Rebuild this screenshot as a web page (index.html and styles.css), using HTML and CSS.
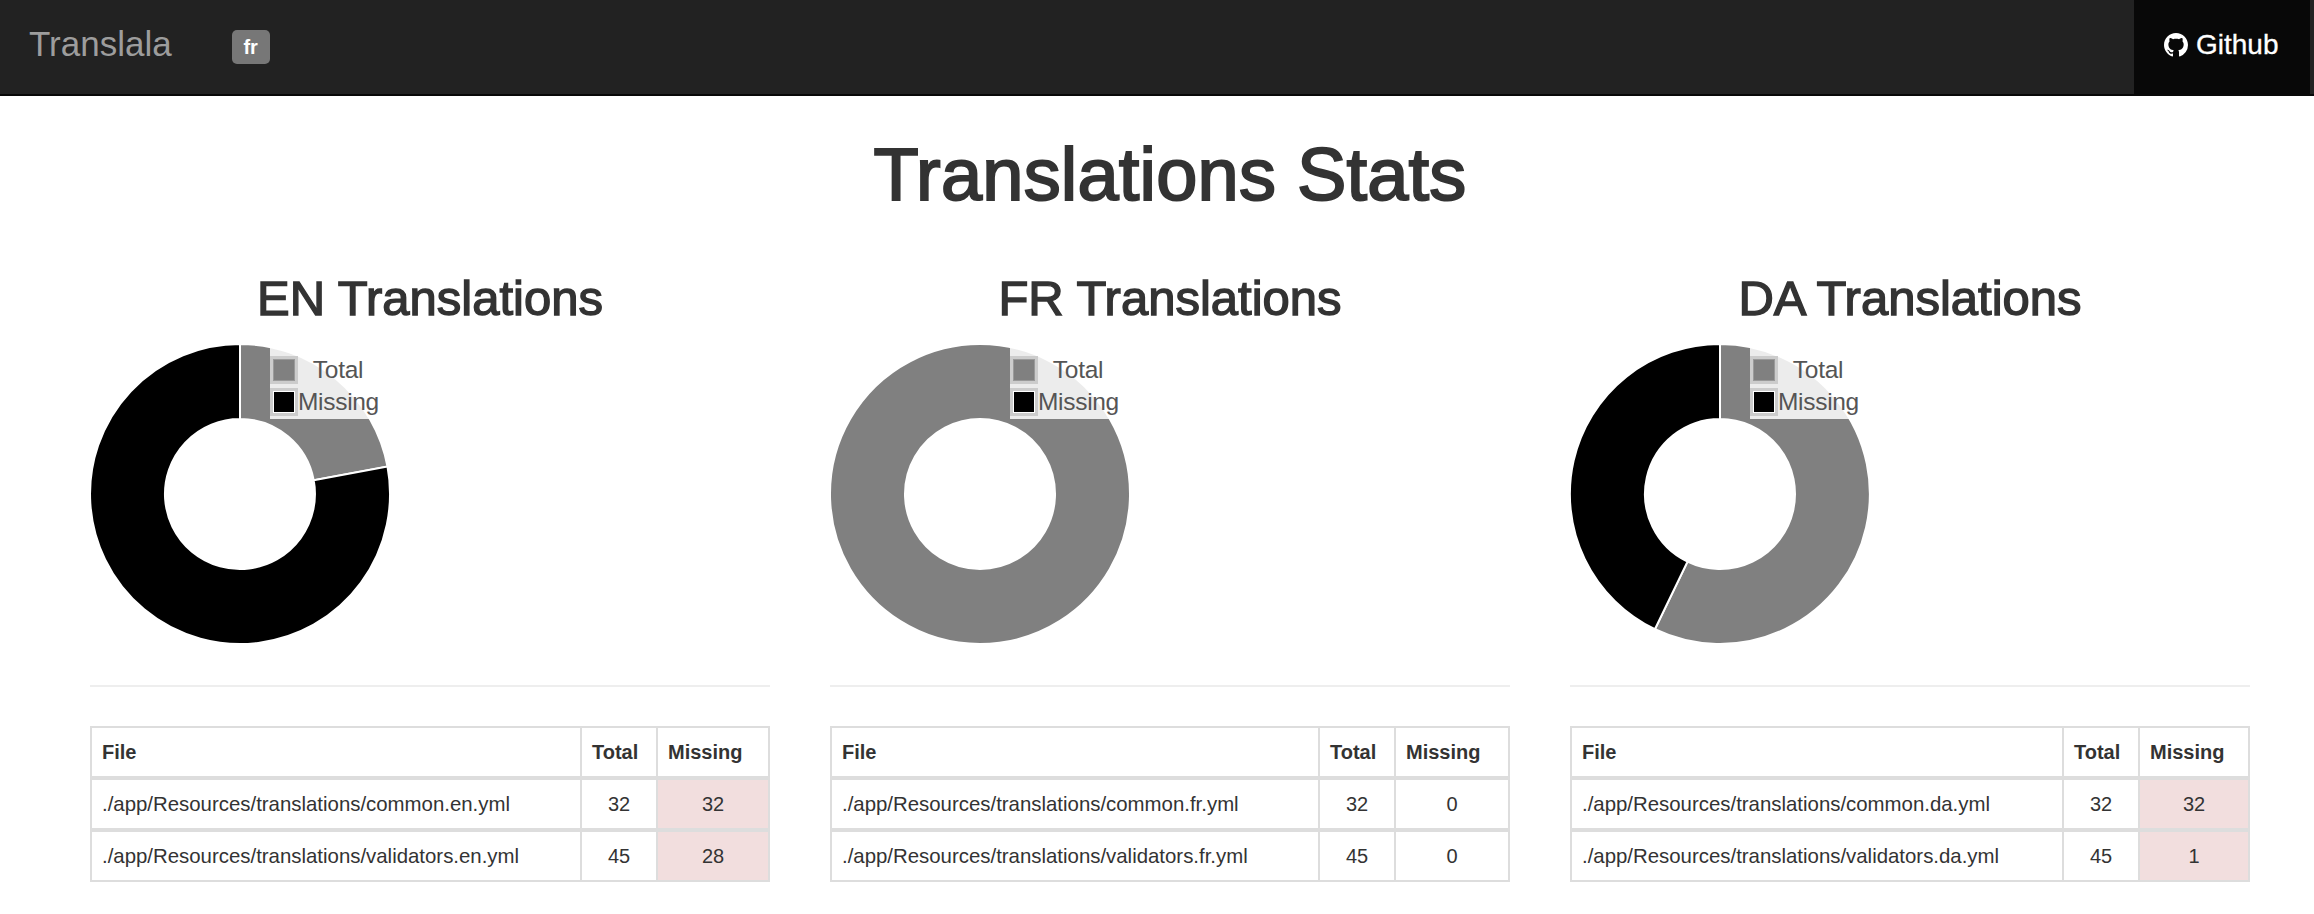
FILE: index.html
```html
<!DOCTYPE html>
<html lang="en">
<head>
<meta charset="utf-8">
<title>Translala</title>
<link rel="stylesheet" href="styles.css">
</head>
<body>
<nav class="navbar">
  <div class="nav-left">
    <a class="brand">Translala</a>
    <span class="badge">fr</span>
  </div>
  <a class="github">
    <svg class="gh-icon" viewBox="0 0 16 16"><path fill="#fff" d="M8 0C3.58 0 0 3.58 0 8c0 3.54 2.29 6.53 5.47 7.59.4.07.55-.17.55-.38 0-.19-.01-.82-.01-1.49-2.01.37-2.53-.49-2.69-.94-.09-.23-.48-.94-.82-1.13-.28-.15-.68-.52-.01-.53.63-.01 1.08.58 1.23.82.72 1.21 1.87.87 2.33.66.07-.52.28-.87.51-1.07-1.78-.2-3.64-.89-3.64-3.95 0-.87.31-1.59.82-2.15-.08-.2-.36-1.02.08-2.12 0 0 .67-.21 2.2.82.64-.18 1.32-.27 2-.27.68 0 1.36.09 2 .27 1.53-1.04 2.2-.82 2.2-.82.44 1.1.16 1.92.08 2.12.51.56.82 1.27.82 2.15 0 3.07-1.87 3.75-3.65 3.95.29.25.54.73.54 1.48 0 1.07-.01 1.93-.01 2.2 0 .21.15.46.55.38A8.013 8.013 0 0 0 16 8c0-4.42-3.58-8-8-8z"/></svg>
    <span>Github</span>
  </a>
</nav>
<main class="container">
  <h1 class="title">Translations Stats</h1>
  <div class="columns">
    <section class="col">
      <h2 class="col-title">EN Translations</h2>
      <div class="chart">
        <svg class="donut" viewBox="0 0 300 300">
          <path class="seg-total" d="M150 0A150 150 0 0 1 297.5 122.6L223.7 136.3A75 75 0 0 0 150 75Z"/>
          <path class="seg-missing" d="M297.5 122.6A150 150 0 1 1 150 0L150 75A75 75 0 1 0 223.7 136.3Z"/>
        </svg>
        <ul class="legend">
          <li class="legend-row"><span class="swatch swatch-total"></span><span class="legend-label">Total</span></li>
          <li class="legend-row"><span class="swatch swatch-missing"></span><span class="legend-label">Missing</span></li>
        </ul>
      </div>
      <hr class="rule">
      <table class="stats stats-en">
        <thead><tr><th>File</th><th class="th-total">Total</th><th class="th-missing">Missing</th></tr></thead>
        <tbody>
          <tr><td>./app/Resources/translations/common.en.yml</td><td class="num">32</td><td class="num danger">32</td></tr>
          <tr><td>./app/Resources/translations/validators.en.yml</td><td class="num">45</td><td class="num danger">28</td></tr>
        </tbody>
      </table>
    </section>
    <section class="col">
      <h2 class="col-title">FR Translations</h2>
      <div class="chart">
        <svg class="donut" viewBox="0 0 300 300">
          <path class="seg-total" fill-rule="evenodd" d="M150 0A150 150 0 1 1 149.99 0ZM150 75A75 75 0 1 0 150.01 75Z"/>
        </svg>
        <ul class="legend">
          <li class="legend-row"><span class="swatch swatch-total"></span><span class="legend-label">Total</span></li>
          <li class="legend-row"><span class="swatch swatch-missing"></span><span class="legend-label">Missing</span></li>
        </ul>
      </div>
      <hr class="rule">
      <table class="stats stats-fr">
        <thead><tr><th>File</th><th class="th-total">Total</th><th class="th-missing">Missing</th></tr></thead>
        <tbody>
          <tr><td>./app/Resources/translations/common.fr.yml</td><td class="num">32</td><td class="num">0</td></tr>
          <tr><td>./app/Resources/translations/validators.fr.yml</td><td class="num">45</td><td class="num">0</td></tr>
        </tbody>
      </table>
    </section>
    <section class="col">
      <h2 class="col-title">DA Translations</h2>
      <div class="chart">
        <svg class="donut" viewBox="0 0 300 300">
          <path class="seg-total" d="M150 0A150 150 0 1 1 84.9 285.2L117.5 217.6A75 75 0 1 0 150 75Z"/>
          <path class="seg-missing" d="M84.9 285.2A150 150 0 0 1 150 0L150 75A75 75 0 0 0 117.5 217.6Z"/>
        </svg>
        <ul class="legend">
          <li class="legend-row"><span class="swatch swatch-total"></span><span class="legend-label">Total</span></li>
          <li class="legend-row"><span class="swatch swatch-missing"></span><span class="legend-label">Missing</span></li>
        </ul>
      </div>
      <hr class="rule">
      <table class="stats stats-da">
        <thead><tr><th>File</th><th class="th-total">Total</th><th class="th-missing">Missing</th></tr></thead>
        <tbody>
          <tr><td>./app/Resources/translations/common.da.yml</td><td class="num">32</td><td class="num danger">32</td></tr>
          <tr><td>./app/Resources/translations/validators.da.yml</td><td class="num">45</td><td class="num danger">1</td></tr>
        </tbody>
      </table>
    </section>
  </div>
</main>
</body>
</html>
```
FILE: styles.css
```css
* { box-sizing: border-box; }
html, body { margin: 0; padding: 0; }
body {
  font-family: "Liberation Sans", Arial, sans-serif;
  font-size: 20px;
  line-height: 1.43;
  color: #333;
  background: #fff;
  overflow: hidden;
}
.navbar {
  display: flex;
  justify-content: space-between;
  height: 96px;
  background: #222;
  border-bottom: 2px solid #080808;
}
.nav-left { display: flex; align-items: center; padding-left: 29px; }
.brand { font-size: 35px; color: #9d9d9d; margin-right: 60px; margin-top: -6px; }
.badge {
  display: flex; align-items: center; justify-content: center;
  width: 38px; height: 34px;
  background: #777; color: #fff; font-size: 20px; font-weight: 700; border-radius: 5px;
}
.github {
  display: flex; align-items: center; gap: 8px;
  width: 176px; padding: 0 0 4px 30px; margin-right: 4px;
  background: #080808; color: #fff; font-size: 28px;
  -webkit-text-stroke: 0.3px #fff;
}
.gh-icon { width: 24px; height: 24px; }
.container { padding: 0 64px 0 90px; }
.title {
  margin: 38px 0 0; text-align: center; font-size: 74px; font-weight: 400; line-height: 1.1;
  letter-spacing: 0.2px; -webkit-text-stroke: 2px #333;
}
.columns { display: grid; grid-template-columns: repeat(3, 680px); column-gap: 60px; margin-top: 57px; }
.col { min-width: 0; }
.col-title {
  margin: 0; text-align: center; font-size: 49px; font-weight: 400; line-height: 1.1;
  -webkit-text-stroke: 1.4px #333;
}
.chart { position: relative; width: 300px; height: 300px; margin-top: 18px; }
.donut { display: block; width: 300px; height: 300px; }
.seg-total { fill: #808080; stroke: #fff; stroke-width: 2; }
.seg-missing { fill: #000; stroke: #fff; stroke-width: 2; }
.legend {
  position: absolute; top: 0; left: 180px; width: 108px; height: 75px;
  margin: 0; padding: 10px 0 0; list-style: none;
  background: rgba(255,255,255,0.85); color: #555;
}
.legend-row { display: flex; align-items: center; height: 32px; }
.swatch { width: 28px; height: 28px; border: 3px solid #ccc; flex: none; box-shadow: inset 0 0 0 1px #fff; }
.swatch-total { background: #808080; box-shadow: inset 0 0 0 1px #9a9a9a; }
.swatch-missing { background: #000; }
.legend-label { flex: 1; text-align: center; font-size: 24.5px; letter-spacing: -0.3px; line-height: 1; white-space: nowrap; }
.rule { height: 2px; margin: 41px 0 39px; border: 0; background: #eee; }
.stats {
  width: 100%; border-collapse: separate; border-spacing: 0;
  border-top: 2px solid #ddd; border-left: 2px solid #ddd;
  font-size: 20.4px;
}
.stats th, .stats td {
  height: 52px; padding: 0 10px; text-align: left; line-height: 1.3;
  border-right: 2px solid #ddd; border-bottom: 4px solid #ddd;
}
.stats tbody tr:last-child td { height: 50px; border-bottom-width: 2px; }
.stats th { font-weight: 700; font-size: 20px; }
.stats td { white-space: nowrap; }
.stats td.num { text-align: center; font-size: 20px; }
.stats td.danger { background: #f2dede; }
.th-total { width: 76px; }
.stats-en .th-missing { width: 112px; }
.stats-fr .th-missing { width: 114px; }
.stats-da .th-missing { width: 110px; }
```
